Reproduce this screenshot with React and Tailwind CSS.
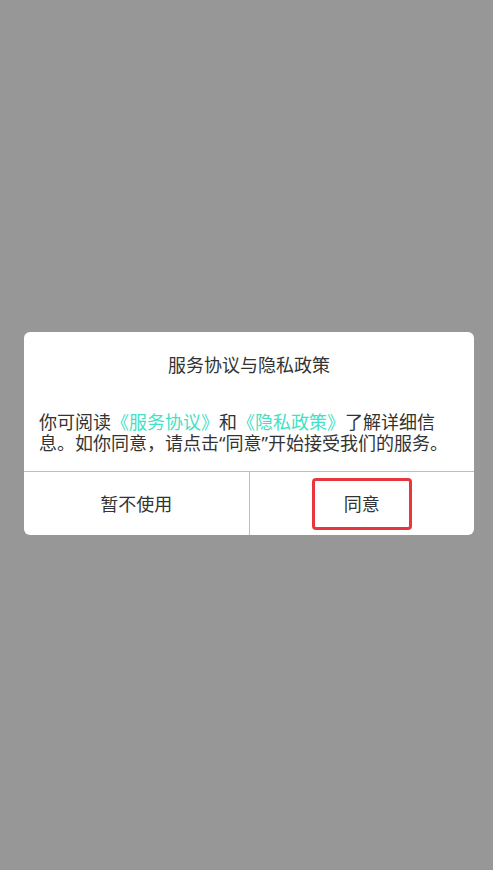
import React from 'react';

const App = () => {
  return (
    <div className="w-full h-[870px] bg-[#979797] relative font-['Noto_Sans_CJK_SC','Noto_Sans',sans-serif]">
      <div className="absolute left-[24px] top-[332px] w-[450px] bg-white rounded-[6px] overflow-hidden">
        <div className="h-[64px] flex items-center justify-center text-[18px] text-[#333]">
          服务协议与隐私政策
        </div>
        <div className="pl-[15px] pr-[20px] pt-[15px] pb-[17px] text-[18px] leading-[21px] text-[#333]">
          你可阅读<span className="text-[#44dfc4]">《服务协议》</span>和<span className="text-[#44dfc4]">《隐私政策》</span>了解详细信息。如你同意，请点击<span className="font-['Noto_Sans',sans-serif]">“</span>同意<span className="font-['Noto_Sans',sans-serif]">”</span>开始接受我们的服务。
        </div>
        <div className="flex h-[64px] border-t-[1.5px] border-[#bdbdbd] text-[18px] text-[#333]">
          <button className="flex-1 flex items-center justify-center border-r-[1.5px] border-[#bdbdbd]">
            暂不使用
          </button>
          <button className="flex-1 flex items-center justify-center">
            <span className="w-[100px] h-[52px] border-[3px] border-[#e8363f] rounded-[4px] flex items-center justify-center">
              同意
            </span>
          </button>
        </div>
      </div>
    </div>
  );
};

export default App;
